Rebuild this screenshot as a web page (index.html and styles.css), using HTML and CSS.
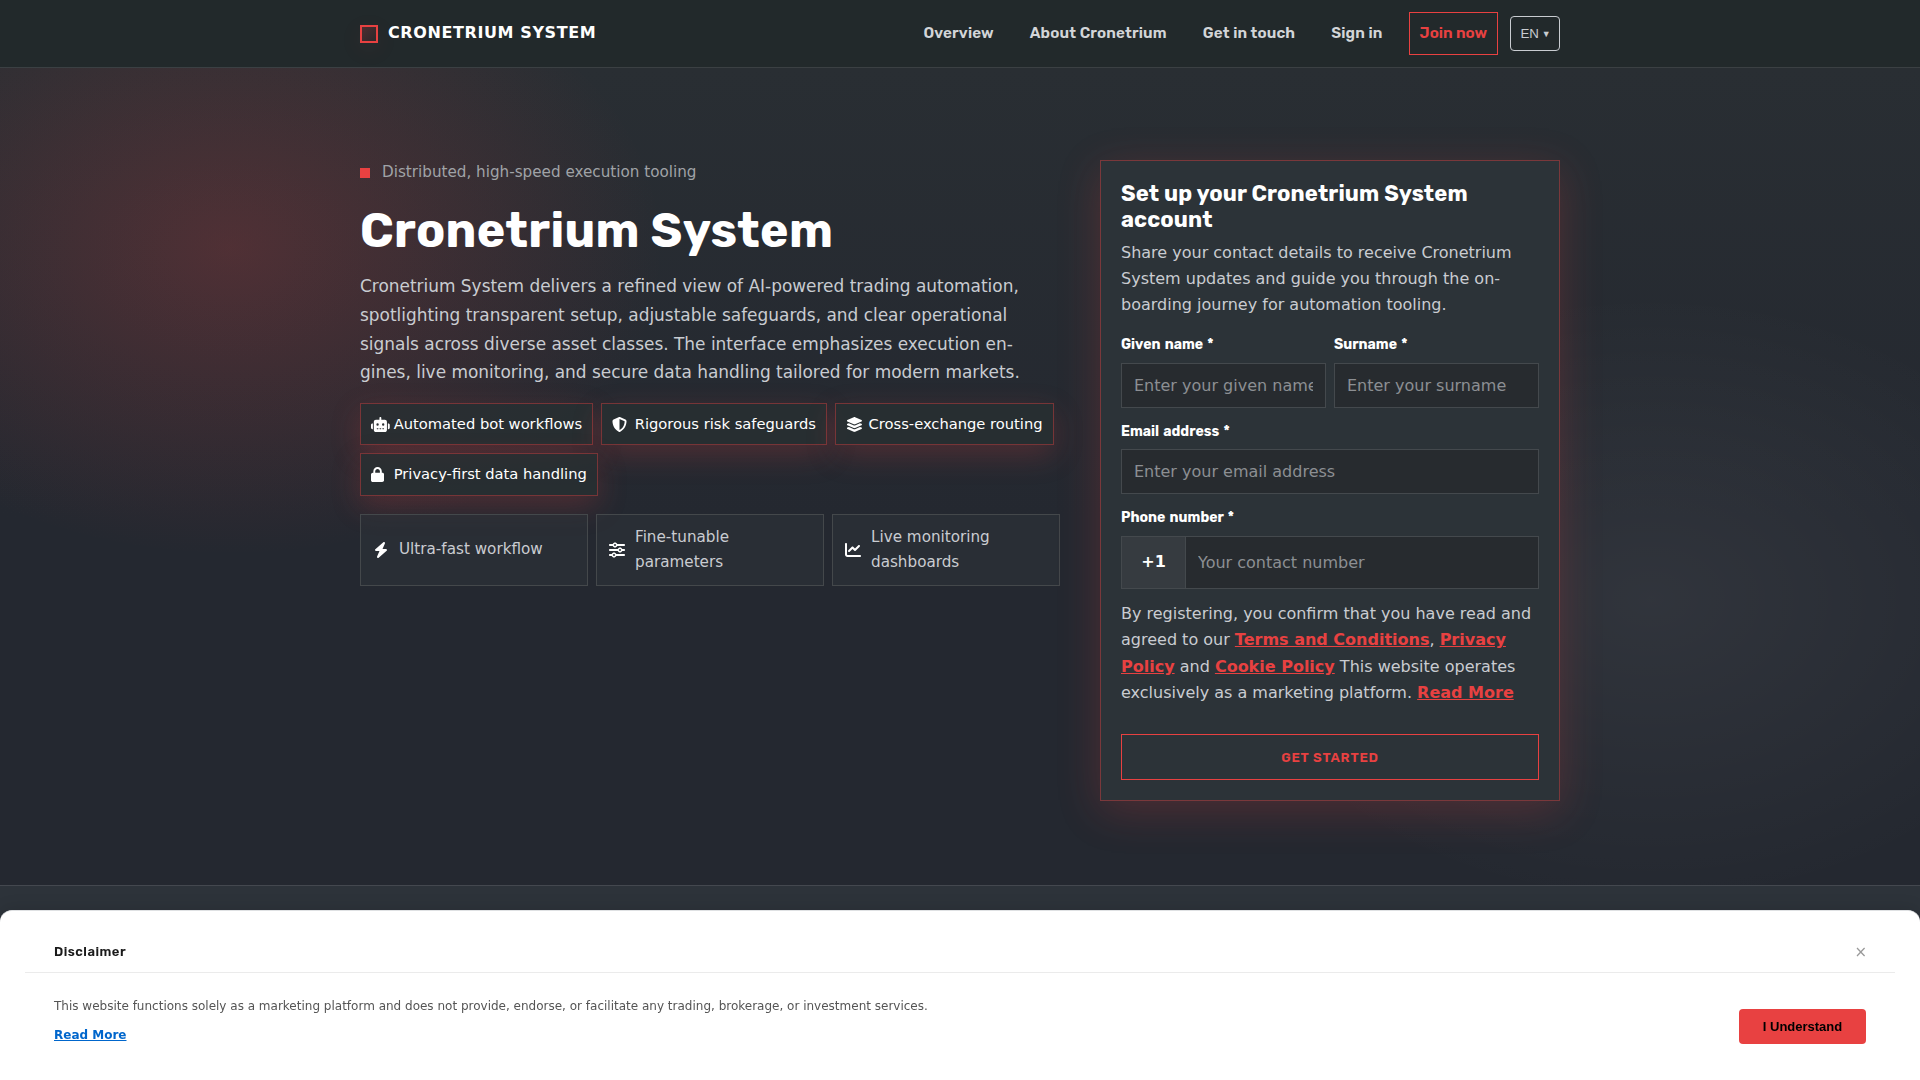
FILE: index.html
```html
<!DOCTYPE html>
<html lang="en">
<head>
<meta charset="utf-8">
<title>Cronetrium System</title>
<link rel="stylesheet" href="styles.css">
</head>
<body>
<header class="header">
  <div class="container header-row">
    <a class="brand"><span class="brand-mark"></span><span>CRONETRIUM SYSTEM</span></a>
    <nav class="nav">
      <a class="nav-link">Overview</a>
      <a class="nav-link">About Cronetrium</a>
      <a class="nav-link">Get in touch</a>
      <a class="nav-link">Sign in</a>
      <a class="nav-join">Join now</a>
      <button class="lang">EN <span class="caret">▼</span></button>
    </nav>
  </div>
</header>
<main>
  <section class="hero">
    <div class="container hero-grid">
      <div class="intro">
        <div class="eyebrow"><span class="dot"></span>Distributed, high-speed execution tooling</div>
        <h1>Cronetrium System</h1>
        <p class="lead">Cronetrium System delivers a refined view of AI-powered trading automation, spotlighting transparent setup, adjustable safeguards, and clear operational signals across diverse asset classes. The interface emphasizes execution en&shy;gines, live monitoring, and secure data handling tailored for modern markets.</p>
        <div class="chips">
          <span class="chip"><span class="icon"><svg viewBox="0 0 640 512"><path d="M320 0c17.700 0 32 14.300 32 32V96H472c39.800 0 72 32.200 72 72V440c0 39.800-32.200 72-72 72H168c-39.800 0-72-32.200-72-72V168c0-39.800 32.200-72 72-72H288V32c0-17.700 14.300-32 32-32zM208 384c-8.800 0-16 7.200-16 16s7.200 16 16 16h32c8.800 0 16-7.200 16-16s-7.200-16-16-16H208zm96 0c-8.800 0-16 7.200-16 16s7.200 16 16 16h32c8.800 0 16-7.200 16-16s-7.200-16-16-16H304zm96 0c-8.800 0-16 7.200-16 16s7.200 16 16 16h32c8.800 0 16-7.200 16-16s-7.200-16-16-16H400zM264 256a40 40 0 1 0 -80 0 40 40 0 1 0 80 0zm152 40a40 40 0 1 0 0-80 40 40 0 1 0 0 80zM48 224H64V416H48c-26.500 0-48-21.500-48-48V272c0-26.500 21.500-48 48-48zm544 0c26.500 0 48 21.500 48 48v96c0 26.500-21.500 48-48 48H576V224h16z"/></svg></span><span>Automated bot workflows</span></span>
          <span class="chip"><span class="icon"><svg viewBox="0 0 512 512"><path d="M256 0c4.600 0 9.200 1 13.400 2.900L457.700 82.800c22 9.300 38.400 31 38.300 57.200c-.5 99.200-41.300 280.700-213.600 363.200c-16.700 8-36.100 8-52.800 0C57.300 420.700 16.500 239.200 16 140c-.1-26.200 16.300-47.900 38.300-57.200L242.700 2.900C246.800 1 251.400 0 256 0zm0 66.800V444.800C394 378 431.100 230.100 432 141.400L256 66.800l0 0z"/></svg></span><span>Rigorous risk safeguards</span></span>
          <span class="chip"><span class="icon"><svg viewBox="0 0 576 512"><path d="M264.500 5.200c14.900-6.900 32.100-6.900 47 0l218.600 101c8.500 3.900 13.900 12.400 13.900 21.800s-5.400 17.900-13.900 21.800l-218.600 101c-14.900 6.900-32.100 6.900-47 0L45.900 149.800C37.400 145.800 32 137.300 32 128s5.400-17.900 13.900-21.800L264.500 5.200zM476.900 209.600l53.200 24.600c8.500 3.900 13.900 12.400 13.900 21.800s-5.400 17.900-13.900 21.800l-218.600 101c-14.900 6.900-32.100 6.900-47 0L45.900 277.800C37.400 273.800 32 265.300 32 256s5.400-17.900 13.900-21.800l53.200-24.600 152 70.200c23.400 10.800 50.400 10.800 73.800 0l152-70.200zm-152 198.200l152-70.200 53.200 24.600c8.500 3.900 13.900 12.400 13.900 21.800s-5.400 17.900-13.900 21.800l-218.600 101c-14.900 6.900-32.100 6.900-47 0L45.900 405.800C37.400 401.800 32 393.300 32 384s5.400-17.900 13.900-21.800l53.200-24.600 152 70.200c23.400 10.800 50.400 10.800 73.800 0z"/></svg></span><span>Cross-exchange routing</span></span>
          <span class="chip"><span class="icon"><svg viewBox="0 0 448 512"><path d="M144 144v48H304V144c0-44.200-35.800-80-80-80s-80 35.800-80 80zM80 192V144C80 64.500 144.500 0 224 0s144 64.500 144 144v48h16c35.300 0 64 28.700 64 64V448c0 35.300-28.700 64-64 64H64c-35.300 0-64-28.700-64-64V256c0-35.300 28.700-64 64-64H80z"/></svg></span><span>Privacy-first data handling</span></span>
        </div>
        <div class="benefits">
          <div class="benefit"><span class="icon icon-lg"><svg class="bolt" viewBox="0 0 448 512"><path d="M349.400 44.600c5.900-13.700 1.500-29.700-10.600-38.500s-28.600-8-39.900 1.800l-256 224c-10 8.800-13.600 22.900-8.900 35.300S50.700 288 64 288H175.500L98.600 467.400c-5.900 13.700-1.500 29.700 10.600 38.500s28.600 8 39.900-1.800l256-224c10-8.800 13.600-22.900 8.900-35.300s-16.600-20.700-30-20.700H272.500L349.400 44.600z"/></svg></span><span>Ultra-fast workflow</span></div>
          <div class="benefit"><span class="icon icon-lg"><svg viewBox="0 0 512 512"><path d="M0 416c0 17.700 14.300 32 32 32l54.700 0c12.300 28.300 40.500 48 73.300 48s61-19.700 73.300-48L480 448c17.700 0 32-14.300 32-32s-14.300-32-32-32l-246.700 0c-12.300-28.300-40.500-48-73.300-48s-61 19.700-73.300 48L32 384c-17.700 0-32 14.300-32 32zm128 0a32 32 0 1 1 64 0 32 32 0 1 1 -64 0zM320 256a32 32 0 1 1 64 0 32 32 0 1 1 -64 0zm32-80c-32.800 0-61 19.700-73.300 48L32 224c-17.700 0-32 14.300-32 32s14.300 32 32 32l246.700 0c12.300 28.300 40.500 48 73.300 48s61-19.700 73.300-48l54.700 0c17.700 0 32-14.300 32-32s-14.300-32-32-32l-54.700 0c-12.300-28.300-40.500-48-73.300-48zM192 128a32 32 0 1 1 0-64 32 32 0 1 1 0 64zm73.300-64C253 35.700 224.800 16 192 16s-61 19.700-73.300 48L32 64C14.300 64 0 78.300 0 96s14.300 32 32 32l86.700 0c12.300 28.300 40.500 48 73.300 48s61-19.700 73.300-48L480 128c17.700 0 32-14.300 32-32s-14.300-32-32-32L265.300 64z"/></svg></span><span>Fine-tunable parameters</span></div>
          <div class="benefit"><span class="icon icon-lg"><svg viewBox="0 0 512 512"><path d="M64 64c0-17.700-14.300-32-32-32S0 46.300 0 64V400c0 44.200 35.800 80 80 80H480c17.700 0 32-14.300 32-32s-14.300-32-32-32H80c-8.800 0-16-7.200-16-16V64zm406.600 86.600c12.500-12.500 12.500-32.800 0-45.300s-32.800-12.500-45.300 0L320 210.700l-57.400-57.400c-12.500-12.500-32.800-12.500-45.300 0l-112 112c-12.500 12.500-12.500 32.800 0 45.300s32.800 12.500 45.300 0L240 221.300l57.400 57.400c12.500 12.500 32.800 12.500 45.300 0l128-128z"/></svg></span><span>Live monitoring dashboards</span></div>
        </div>
      </div>
      <form class="card">
        <h2>Set up your Cronetrium System account</h2>
        <p class="card-text">Share your contact details to receive Cronetrium System updates and guide you through the on&shy;boarding journey for automation tooling.</p>
        <div class="name-row">
          <div class="field"><label>Given name *</label><input placeholder="Enter your given name"></div>
          <div class="field"><label>Surname *</label><input placeholder="Enter your surname"></div>
        </div>
        <div class="field email-field"><label>Email address *</label><input placeholder="Enter your email address"></div>
        <div class="field phone-field"><label>Phone number *</label>
          <div class="phone"><span class="prefix">+1</span><input placeholder="Your contact number"></div>
        </div>
        <p class="terms">By registering, you confirm that you have read and agreed to our <a>Terms and Conditions</a>, <a>Privacy Policy</a> and <a>Cookie Policy</a> This website operates exclusively as a marketing platform. <a>Read More</a></p>
        <button class="submit" type="button">GET STARTED</button>
      </form>
    </div>
  </section>
  <section class="next"></section>
</main>
<aside class="disclaimer">
  <div class="disc-head"><span class="disc-title">Disclaimer</span><span class="close">×</span></div>
  <div class="disc-body">
    <div class="disc-text"><p>This website functions solely as a marketing platform and does not provide, endorse, or facilitate any trading, brokerage, or investment services.</p><a>Read More</a></div>
    <button class="accept">I Understand</button>
  </div>
</aside>
</body>
</html>
```
FILE: styles.css
```css
* { box-sizing: border-box; }
html, body { height: 100%; }
body {
  margin: 0;
  overflow: hidden;
  background: #242830;
  color: #c9ccd1;
  font: 16px/1.65 "DejaVu Sans", sans-serif;
}
h1, h2, p { margin: 0; }
h1, h2, label, .nav-link, .nav-join, .submit, .disc-title { font-family: Rubik, Inter, sans-serif; }
input, button { font-family: inherit; }
.container { width: 1200px; margin: 0 auto; }

.header { height: 68px; background: #22292b; border-bottom: 1px solid #3b4043; }
.header-row { display: flex; justify-content: space-between; align-items: center; height: 67px; }
.brand { display: flex; align-items: center; gap: 10px; color: #fff; font-weight: 700; letter-spacing: .6px; }
.brand-mark {
  width: 18px; height: 18px; margin-top: 2px;
  border: 2px solid #e84141;
  background: linear-gradient(135deg, #4e2d30, #2b292b);
  box-shadow: 0 6px 24px rgba(232, 65, 65, .08);
}
.nav { display: flex; align-items: center; font-size: 15.2px; font-weight: 600; letter-spacing: .15px; color: #d3d5d8; }
.nav-link { margin-right: 36px; }
.nav-join { margin-left: -10px; padding: 8px 10px; border: 1px solid #e84141; color: #e84141; letter-spacing: 0; }
.lang {
  width: 50px; height: 35px; margin-left: 12px; padding: 0 0 0 1px;
  background: transparent; border: 1px solid #c9ccd1; border-radius: 4px;
  color: #c9ccd1; font: 13.3px "Liberation Sans", sans-serif;
}
.caret { margin-left: -1px; font-size: 9px; vertical-align: 1px; }

.hero {
  height: 817px;
  padding-top: 92px;
  background:
    radial-gradient(620px 440px at 12% 22%, rgba(232, 65, 65, .21), transparent 70%),
    radial-gradient(620px 440px at 86% 65%, rgba(255, 255, 255, .06), transparent 70%),
    linear-gradient(180deg, #292e33, #242830 55%, #242830);
}
.hero-grid { display: grid; grid-template-columns: 700px 460px; gap: 40px; align-items: start; }
.eyebrow { display: flex; align-items: center; gap: 12px; height: 25px; color: #a0a3a7; font-size: 15.2px; }
.dot { width: 10px; height: 10px; margin-top: 1px; background: #e84141; }
h1 { margin-top: 19px; color: #fff; font-size: 48px; line-height: 53px; font-weight: 700; letter-spacing: .33px; }
.lead { max-width: 680px; margin-top: 15px; font-size: 16.96px; line-height: 28.8px; }
.chips { display: flex; flex-wrap: wrap; gap: 8px; margin-top: 16px; }
.chip {
  display: flex; align-items: center; gap: 8px; padding: 8px 10px;
  border: 1px solid rgba(232, 65, 65, .42); color: #fff; font-size: 14.7px;
  background: rgba(40, 48, 50, .8);
  box-shadow: 0 10px 30px rgba(232, 65, 65, .22);
}
.icon { width: 14.7px; height: 15px; flex: none; color: #fff; }
.icon svg { display: block; height: 15px; fill: currentColor; }
.icon-lg { width: 16px; height: 16px; }
.icon-lg svg { height: 16px; }
.icon-lg .bolt { margin-left: 1px; }
.benefits { display: grid; grid-template-columns: repeat(3, 1fr); gap: 8px; margin-top: 18px; }
.benefit {
  display: flex; align-items: center; gap: 10px; padding: 10px 12px;
  border: 1px solid #44484b; background: rgba(45, 50, 56, .6); font-size: 15.2px;
}

.card {
  height: 641px; padding: 20px;
  border: 1px solid rgba(232, 65, 65, .42); background: #2c3338;
  box-shadow: 0 10px 40px rgba(232, 65, 65, .22);
}
h2 { color: #fff; font-size: 22px; line-height: 26.4px; font-weight: 700; letter-spacing: .11px; }
.card-text { margin-top: 6px; line-height: 26.1px; }
.name-row { display: grid; grid-template-columns: 1fr 1fr; gap: 8px; }
.field { margin-top: 12px; min-width: 0; }
.name-row .field { margin-top: 16px; }
label { display: block; height: 29px; color: #fff; font-size: 14px; line-height: 22px; font-weight: 700; word-spacing: 1.2px; }
.email-field label { line-height: 23px; }
.phone-field label { height: 30px; line-height: 23px; }
input {
  display: block; width: 100%; height: 45px; padding: 0 12px;
  background: #272b2f; border: 1px solid #44494d; border-radius: 0; font-size: 16px; color: #fff;
}
input::placeholder { color: #8c8f93; opacity: 1; }
.phone { display: flex; height: 53px; border: 1px solid #44494d; background: #272b2f; }
.phone input { height: 51px; border: 0; }
.prefix {
  width: 64px; flex: none; display: flex; align-items: center; justify-content: center;
  padding-bottom: 1px;
  background: #363b40; border-right: 1px solid #44494d; color: #fff; font-weight: 700;
}
.terms { margin-top: 11.7px; }
.terms a { color: #e84141; font-weight: 700; text-decoration: underline; }
.submit {
  display: block; width: 100%; height: 46px; margin-top: 27.3px; padding-top: 2px;
  background: transparent; border: 1px solid #e84141; color: #e84141;
  font-size: 13.3px; font-weight: 600; letter-spacing: .8px;
}
.next { height: 195px; border-top: 1px solid #44484f; background: #2d333a; }

.disclaimer {
  position: fixed; left: 0; right: 0; bottom: 0; height: 170px; padding: 24px 25px 0;
  background: #fff; border-top: 1px solid #dfe1e3; border-radius: 12px 12px 0 0;
  box-shadow: 0 -2px 16px rgba(0, 0, 0, .12);
}
.disc-head { display: flex; justify-content: space-between; align-items: center; height: 38px; padding: 0 29px 3px; border-bottom: 1px solid #ebebeb; }
.disc-title { color: #1a1a1a; font-size: 13px; font-weight: 600; letter-spacing: .5px; }
.close { margin-right: -1px; color: #999; font: 15px "DejaVu Sans", sans-serif; }
.disc-body { display: flex; justify-content: space-between; padding: 23px 29px 0; }
.disc-text { color: #555; font-size: 12px; line-height: 20px; }
.disc-text p { margin-bottom: 9px; }
.disc-text a { color: #0066cc; font-weight: 700; text-decoration: underline; }
.accept {
  width: 127px; height: 35px; margin-top: 13px; border: 0; border-radius: 4px;
  background: #e84141; color: #000; font: bold 13px "Liberation Sans", sans-serif;
}
```
